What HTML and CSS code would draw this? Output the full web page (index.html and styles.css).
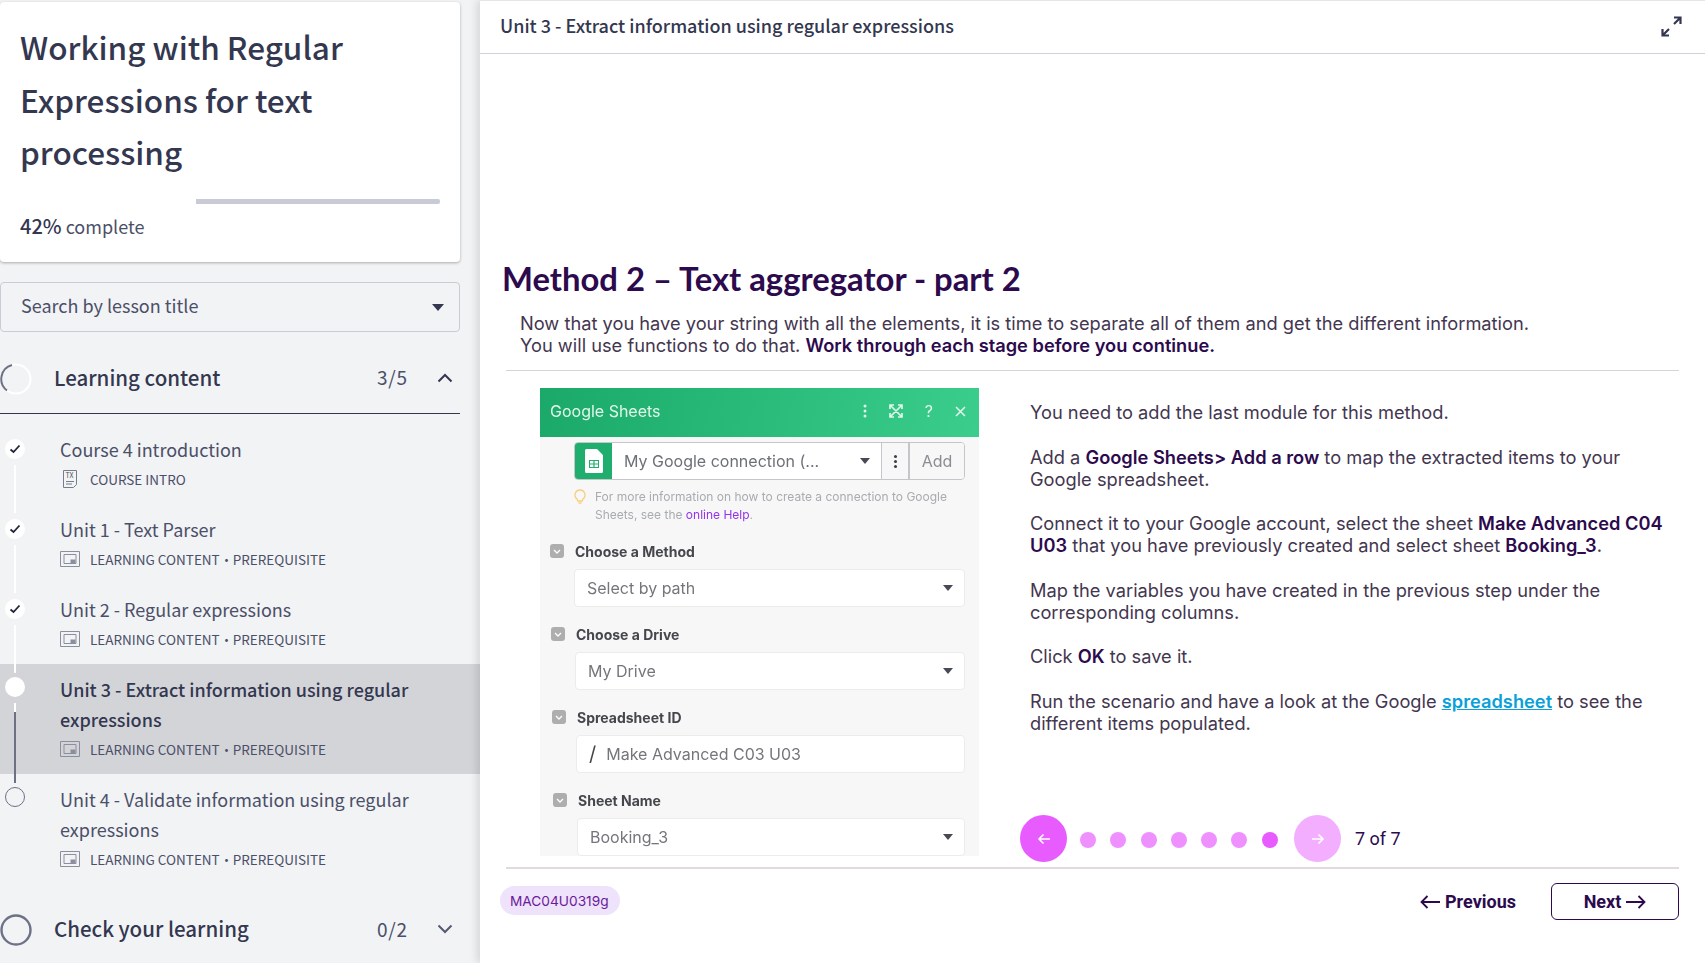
FILE: index.html
```html
<!DOCTYPE html>
<html lang="en">
<head>
  <meta charset="UTF-8">
  <meta name="viewport" content="width=device-width, initial-scale=1.0">
  <title>Working with Regular Expressions for text processing</title>
  <link rel="stylesheet" href="styles.css">
</head>
<body>
  <aside class="sidebar">
    <div class="course-card">
      <h1>Working with Regular Expressions for text processing</h1>
      <div class="progress"><div class="progress-done"></div><div class="progress-left"></div></div>
      <p class="progress-text"><strong>42%</strong> complete</p>
    </div>

    <div class="search">
      <span>Search by lesson title</span>
      <span class="caret"></span>
    </div>

    <div class="section section-open">
      <svg class="ring" width="32" height="32" viewBox="0 0 32 32">
        <circle cx="16" cy="16" r="14.5" fill="#f2f3f5" stroke="#fff" stroke-width="2"/>
        <path d="M12 2 A14.5 14.5 0 0 0 7 27.5" fill="none" stroke="#6e7186" stroke-width="2"/>
      </svg>
      <span class="section-name">Learning content</span>
      <span class="section-count">3/5</span>
      <svg class="chevron" width="16" height="10" viewBox="0 0 16 10"><path d="M1.5 8.5 8 2l6.5 6.5" fill="none" stroke="#333750" stroke-width="2"/></svg>
    </div>

    <ul class="lessons">
      <li class="lesson">
        <div class="marker">
          <span class="dot"><svg width="12" height="10" viewBox="0 0 12 10"><path d="M1.5 5.5 4.5 8l6-6.5" fill="none" stroke="#22253a" stroke-width="1.8"/></svg></span>
          <span class="line"></span>
        </div>
        <div class="lesson-body">
          <div class="lesson-title">Course 4 introduction</div>
          <div class="lesson-meta">
            <svg class="meta-icon" width="20" height="18" viewBox="0 0 20 18"><path d="M3.5.5h13v14l-3 3h-10z" fill="none" stroke="#777b8e"/><path d="M6 11.5h8M6 14h6" stroke="#777b8e"/><text x="5.5" y="8" font-size="7" fill="#555">Tx</text></svg>
            <span>Course intro</span>
          </div>
        </div>
      </li>
      <li class="lesson">
        <div class="marker">
          <span class="dot"><svg width="12" height="10" viewBox="0 0 12 10"><path d="M1.5 5.5 4.5 8l6-6.5" fill="none" stroke="#22253a" stroke-width="1.8"/></svg></span>
          <span class="line"></span>
        </div>
        <div class="lesson-body">
          <div class="lesson-title">Unit 1 - Text Parser</div>
          <div class="lesson-meta">
            <svg class="meta-icon" width="20" height="16" viewBox="0 0 20 16"><path d="M.5.5h19v15H.5z" fill="none" stroke="#8b8e9f"/><path d="M4 3.5h12v9H4z" fill="none" stroke="#8b8e9f"/><path d="M10.5 8.5h5v4h-5z" fill="#8b8e9f"/></svg>
            <span>Learning content</span><span class="sep">·</span><span>Prerequisite</span>
          </div>
        </div>
      </li>
      <li class="lesson">
        <div class="marker">
          <span class="dot"><svg width="12" height="10" viewBox="0 0 12 10"><path d="M1.5 5.5 4.5 8l6-6.5" fill="none" stroke="#22253a" stroke-width="1.8"/></svg></span>
          <span class="line"></span>
        </div>
        <div class="lesson-body">
          <div class="lesson-title">Unit 2 - Regular expressions</div>
          <div class="lesson-meta">
            <svg class="meta-icon" width="20" height="16" viewBox="0 0 20 16"><path d="M.5.5h19v15H.5z" fill="none" stroke="#8b8e9f"/><path d="M4 3.5h12v9H4z" fill="none" stroke="#8b8e9f"/><path d="M10.5 8.5h5v4h-5z" fill="#8b8e9f"/></svg>
            <span>Learning content</span><span class="sep">·</span><span>Prerequisite</span>
          </div>
        </div>
      </li>
      <li class="lesson lesson-current">
        <div class="marker">
          <span class="dot"></span>
          <span class="line line-current"></span>
        </div>
        <div class="lesson-body">
          <div class="lesson-title">Unit 3 - Extract information using regular expressions</div>
          <div class="lesson-meta">
            <svg class="meta-icon" width="20" height="16" viewBox="0 0 20 16"><path d="M.5.5h19v15H.5z" fill="none" stroke="#8b8e9f"/><path d="M4 3.5h12v9H4z" fill="none" stroke="#8b8e9f"/><path d="M10.5 8.5h5v4h-5z" fill="#8b8e9f"/></svg>
            <span>Learning content</span><span class="sep">·</span><span>Prerequisite</span>
          </div>
        </div>
      </li>
      <li class="lesson lesson-next">
        <div class="marker">
          <span class="dot dot-empty"></span>
        </div>
        <div class="lesson-body">
          <div class="lesson-title">Unit 4 - Validate information using regular expressions</div>
          <div class="lesson-meta">
            <svg class="meta-icon" width="20" height="16" viewBox="0 0 20 16"><path d="M.5.5h19v15H.5z" fill="none" stroke="#8b8e9f"/><path d="M4 3.5h12v9H4z" fill="none" stroke="#8b8e9f"/><path d="M10.5 8.5h5v4h-5z" fill="#8b8e9f"/></svg>
            <span>Learning content</span><span class="sep">·</span><span>Prerequisite</span>
          </div>
        </div>
      </li>
    </ul>

    <div class="section section-closed">
      <svg class="ring" width="32" height="32" viewBox="0 0 32 32">
        <circle cx="16" cy="16" r="14.5" fill="none" stroke="#6e7186" stroke-width="2.4"/>
      </svg>
      <span class="section-name">Check your learning</span>
      <span class="section-count">0/2</span>
      <svg class="chevron" width="16" height="10" viewBox="0 0 16 10"><path d="M1.5 1.5 8 8l6.5-6.5" fill="none" stroke="#555972" stroke-width="2"/></svg>
    </div>
  </aside>

  <main class="main">
    <header class="topbar">
      <span>Unit 3 - Extract information using regular expressions</span>
      <svg width="21" height="21" viewBox="0 0 21 21"><path d="M13 1.500h6.500V8M19 2l-6 6M8 19.500H1.500V13M2 19l6-6" fill="none" stroke="#333750" stroke-width="2.200"/></svg>
    </header>

    <section class="slide">
      <h2>Method 2 – Text aggregator - part 2</h2>
      <p class="intro">Now that you have your string with all the elements, it is time to separate all of them and get the different information.<br>You will use functions to do that. <b>Work through each stage before you continue.</b></p>

      <div class="slide-row">
        <div class="panel">
          <div class="panel-head">
            <span>Google Sheets</span>
            <div class="panel-tools">
              <svg width="4" height="14" viewBox="0 0 4 14"><circle cx="2" cy="2" r="1.500" fill="#dff5ea"/><circle cx="2" cy="7" r="1.500" fill="#dff5ea"/><circle cx="2" cy="12" r="1.500" fill="#dff5ea"/></svg>
              <svg width="14" height="14" viewBox="0 0 14 14"><path d="M1 5V1h4M9 1h4v4M13 9v4H9M5 13H1V9M1.500 1.500l11 11M12.500 1.500l-11 11" fill="none" stroke="#dff5ea" stroke-width="1.700"/></svg>
              <span class="tool-q">?</span>
              <svg width="11" height="11" viewBox="0 0 11 11"><path d="M1 1l9 9M10 1l-9 9" stroke="#dff5ea" stroke-width="1.600"/></svg>
            </div>
          </div>

          <div class="panel-body">
            <div class="connection">
              <span class="conn-logo">
                <svg width="18" height="24" viewBox="0 0 18 24"><path d="M0 1.500A1.500 1.500 0 0 1 1.500 0H12l6 6v16.500a1.500 1.500 0 0 1-1.500 1.500h-15A1.500 1.500 0 0 1 0 22.500z" fill="#fff"/><path d="M4 11h10v8H4z" fill="#1fae6e"/><path d="M5 12h3.400v2.500H5zM9.600 12H13v2.500H9.600zM5 15.600h3.400V18H5zM9.600 15.600H13V18H9.600z" fill="#fff"/></svg>
              </span>
              <span class="conn-name">My Google connection (...<i class="tri"></i></span>
              <span class="conn-more"><i></i><i></i><i></i></span>
              <span class="conn-add">Add</span>
            </div>

            <div class="hint">
              <svg width="12" height="15" viewBox="0 0 12 15"><path d="M6 1a5 5 0 0 0-3 9l.8 2h4.400l.8-2a5 5 0 0 0-3-9zM4.500 14h3" fill="none" stroke="#f7cf7b" stroke-width="1.300"/></svg>
              <p>For more information on how to create a connection to Google Sheets, see the <a>online Help</a>.</p>
            </div>

            <div class="field">
              <div class="field-label"><span class="check"><svg width="8" height="5" viewBox="0 0 8 5"><path d="M1 1l3 3 3-3" fill="none" stroke="#fff" stroke-width="1.300"/></svg></span>Choose a Method</div>
              <div class="input">Select by path<i class="tri"></i></div>
            </div>
            <div class="field field-b">
              <div class="field-label"><span class="check"><svg width="8" height="5" viewBox="0 0 8 5"><path d="M1 1l3 3 3-3" fill="none" stroke="#fff" stroke-width="1.300"/></svg></span>Choose a Drive</div>
              <div class="input">My Drive<i class="tri"></i></div>
            </div>
            <div class="field field-c">
              <div class="field-label"><span class="check"><svg width="8" height="5" viewBox="0 0 8 5"><path d="M1 1l3 3 3-3" fill="none" stroke="#fff" stroke-width="1.300"/></svg></span>Spreadsheet ID</div>
              <div class="input"><span class="slash">/</span>Make Advanced C03 U03</div>
            </div>
            <div class="field field-d">
              <div class="field-label"><span class="check"><svg width="8" height="5" viewBox="0 0 8 5"><path d="M1 1l3 3 3-3" fill="none" stroke="#fff" stroke-width="1.300"/></svg></span>Sheet Name</div>
              <div class="input">Booking_3<i class="tri"></i></div>
            </div>
          </div>
        </div>

        <div class="slide-text">
          <div class="copy">
            <p>You need to add the last module for this method.</p>
            <p>Add a <b>Google Sheets&gt; Add a row</b> to map the extracted items to your Google spreadsheet.</p>
            <p>Connect it to your Google account, select the sheet <b>Make Advanced C04 U03</b> that you have previously created and select sheet <b>Booking_3</b>.</p>
            <p>Map the variables you have created in the previous step under the corresponding columns.</p>
            <p>Click <b>OK</b> to save it.</p>
            <p>Run the scenario and have a look at the Google <a>spreadsheet</a> to see the different items populated.</p>
          </div>
          <div class="pager">
            <span class="pager-btn">
              <svg width="14" height="12" viewBox="0 0 14 12"><path d="M13 6H2M6.500 1.500 2 6l4.500 4.500" fill="none" stroke="#fff" stroke-width="1.600"/></svg>
            </span>
            <span class="pager-dots"><i></i><i></i><i></i><i></i><i></i><i></i><i class="on"></i></span>
            <span class="pager-btn pager-off">
              <svg width="14" height="12" viewBox="0 0 14 12"><path d="M1 6h11M7.500 1.500 12 6l-4.500 4.500" fill="none" stroke="#fff" stroke-width="1.600"/></svg>
            </span>
            <span class="pager-count">7 of 7</span>
          </div>
        </div>
      </div>
    </section>

    <footer class="foot">
      <span class="pill">MAC04U0319g</span>
      <div class="foot-nav">
        <a class="nav-prev">
          <svg width="20" height="14" viewBox="0 0 20 14"><path d="M20 7H2M7.500 1 1.500 7l6 6" fill="none" stroke="#2c0a4d" stroke-width="1.800"/></svg>
          Previous
        </a>
        <a class="nav-next">
          Next
          <svg width="20" height="14" viewBox="0 0 20 14"><path d="M0 7h18M12.500 1l6 6-6 6" fill="none" stroke="#2c0a4d" stroke-width="1.800"/></svg>
        </a>
      </div>
    </footer>
  </main>
</body>
</html>
```

FILE: styles.css
```css
:root {
  --side-bg: #f2f3f5;
  --slate: #333750;
  --slate-soft: #4b4f68;
  --plum: #2c0a4d;
  --copy: #43364f;
  --pink: #e85bff;
  --sans: "Noto Sans CJK SC", "Noto Sans", sans-serif;
}

* {
  margin: 0;
  padding: 0;
  box-sizing: border-box;
}

html, body {
  height: 100%;
}

body {
  display: flex;
  height: 963px;
  overflow: hidden;
  background: #fff;
  font-family: var(--sans);
  color: var(--slate);
}

/* Sidebar */
.sidebar {
  width: 480px;
  flex-shrink: 0;
  padding-top: 2px;
  background: var(--side-bg);
  overflow: hidden;
}

.course-card {
  width: 460px;
  height: 260px;
  padding: 18px 20px 0;
  background: #fff;
  border-radius: 4px;
  box-shadow: 0 1px 3px rgba(0, 0, 0, 0.3);
}

.course-card h1 {
  font-size: 31.5px;
  line-height: 52.5px;
  font-weight: 500;
  width: 380px;
}

.progress {
  display: flex;
  height: 5px;
  margin-top: 21px;
  width: 420px;
}

.progress-done {
  width: 42%;
}

.progress-left {
  flex: 1;
  background: #c8cad6;
  border-radius: 0 2px 2px 0;
}

.progress-text {
  margin-top: 10px;
  font-size: 18px;
  line-height: 24px;
  color: var(--slate-soft);
}

.progress-text strong {
  font-size: 20px;
  font-weight: 500;
  color: var(--slate);
}

.search {
  display: flex;
  align-items: center;
  justify-content: space-between;
  width: 460px;
  height: 50px;
  margin-top: 20px;
  padding: 0 15px 0 20px;
  border: 1px solid #c9ccd5;
  border-radius: 4px;
  font-size: 18px;
  color: var(--slate-soft);
}

.search span:first-child {
  padding-bottom: 4px;
}

.caret {
  width: 0;
  height: 0;
  border-left: 6px solid transparent;
  border-right: 6px solid transparent;
  border-top: 7px solid var(--slate);
}

.section {
  display: flex;
  align-items: center;
  width: 460px;
  height: 70px;
}

.section-open {
  margin-top: 12px;
  border-bottom: 1px solid var(--slate);
}

.section-closed {
  margin-top: 11px;
}

.ring {
  flex-shrink: 0;
  margin-right: 22px;
}

.section-name {
  flex: 1;
  padding-bottom: 4px;
  font-size: 20.500px;
  font-weight: 500;
}

.section-count {
  width: 60px;
  padding-bottom: 4px;
  font-size: 19px;
  letter-spacing: 0.8px;
  color: var(--slate-soft);
}

.chevron {
  margin-right: 7px;
  margin-bottom: 2px;
}

.lessons {
  list-style: none;
  margin-top: 10px;
}

.lesson {
  display: flex;
  height: 80px;
}

.lesson-current,
.lesson-next {
  height: 110px;
}

.lesson-current {
  background: #d3d4d8;
}

.marker {
  display: flex;
  flex-direction: column;
  align-items: center;
  width: 30px;
  padding-top: 15px;
  margin-right: 30px;
}

.lesson-current .marker,
.lesson-next .marker {
  padding-top: 13px;
}

.dot {
  display: flex;
  align-items: center;
  justify-content: center;
  width: 20px;
  height: 20px;
  flex-shrink: 0;
  border-radius: 50%;
  background: #fff;
}

.dot-empty {
  background: none;
  border: 1px solid #6e7186;
}

.line {
  position: relative;
  flex: 1;
  width: 2px;
  margin: 6px 0 -9px;
  background: #fff;
}

.line-current {
  background: linear-gradient(#fff 0 9px, #6e7186 9px);
}

.lesson-body {
  padding-top: 10px;
}

.lesson-title {
  font-size: 18px;
  line-height: 30px;
  color: var(--slate-soft);
  width: 370px;
}

.lesson-current .lesson-title {
  font-weight: 500;
  color: var(--slate);
}

.lesson-meta {
  display: flex;
  align-items: center;
  gap: 10px;
  height: 30px;
  font-size: 13.500px;
  color: var(--slate-soft);
  text-transform: uppercase;
}

.sep {
  width: 13px;
  margin: 0 -10px;
  text-align: center;
}

/* Main */
.main {
  position: relative;
  flex: 1;
  display: flex;
  flex-direction: column;
  box-shadow: -3px 0 8px rgba(0, 0, 0, 0.12);
  background: #fff;
}

.topbar {
  display: flex;
  align-items: center;
  justify-content: space-between;
  height: 54px;
  padding: 0 23px 0 20px;
  border-top: 1px solid #e5e5e8;
  border-bottom: 1px solid #cfd0da;
  font-size: 18px;
  font-weight: 500;
}

.topbar span {
  padding-bottom: 4px;
}

.topbar svg {
  margin-bottom: 2px;
}

.slide {
  flex: 1;
  padding: 205px 26px 0;
}

.slide h2 {
  margin-left: -4px;
  font-family: Lato, sans-serif;
  font-size: 32.800px;
  line-height: 40px;
  font-weight: 700;
  color: var(--plum);
}

.intro {
  margin-top: 13px;
  padding-left: 14px;
  font-family: Inter, sans-serif;
  font-size: 18.250px;
  line-height: 22px;
  color: var(--copy);
}

.intro b {
  font-weight: 600;
  color: var(--plum);
}

.slide-row {
  display: flex;
  height: 499px;
  margin-top: 14px;
  padding-top: 17px;
  border-top: 1px solid #d6d4d6;
  border-bottom: 2px solid #e0dcdc;
}

/* Screenshot panel */
.panel {
  width: 439px;
  height: 468px;
  margin-left: 34px;
  background: #f7f7f7;
  overflow: hidden;
  font-family: Inter, sans-serif;
  filter: blur(0.35px);
}

.panel-head {
  display: flex;
  align-items: center;
  justify-content: space-between;
  height: 49px;
  padding: 0 13px 3px 10px;
  background: linear-gradient(100deg, #1aa968, #3acd8b);
  font-size: 16px;
  color: #e3f6ec;
}

.panel-tools {
  display: flex;
  align-items: center;
  gap: 22px;
}

.tool-q {
  font-size: 16px;
}

.panel-body {
  padding: 5px 14px 0 34px;
}

.connection {
  display: flex;
  height: 38px;
  border: 1px solid #c4c6ca;
  border-radius: 4px;
  overflow: hidden;
  background: #fff;
  font-size: 16px;
  color: #6e7078;
}

.conn-logo {
  display: flex;
  align-items: center;
  justify-content: center;
  width: 37px;
  background: #1fae6e;
}

.conn-name {
  flex: 1;
  display: flex;
  align-items: center;
  padding-left: 12px;
  position: relative;
}

.conn-more {
  display: flex;
  flex-direction: column;
  align-items: center;
  justify-content: center;
  gap: 2px;
  width: 29px;
  border-left: 1px solid #c4c6ca;
  border-right: 2px solid #c4c6ca;
  background: #f7f7f7;
}

.conn-more i {
  width: 3px;
  height: 3px;
  border-radius: 50%;
  background: #3d3f47;
}

.conn-add {
  display: flex;
  align-items: center;
  justify-content: center;
  width: 54px;
  background: #f7f7f7;
  color: #8b8d93;
}

.tri {
  width: 0;
  height: 0;
  border-left: 5px solid transparent;
  border-right: 5px solid transparent;
  border-top: 6px solid #474a55;
  margin-left: auto;
  margin-right: 11px;
}

.hint {
  display: flex;
  gap: 9px;
  margin-top: 8px;
  margin-bottom: 15px;
}

.hint svg {
  flex-shrink: 0;
  margin-top: 1px;
}

.hint p {
  font-size: 12px;
  line-height: 18px;
  color: #a9abb0;
}

.hint a {
  color: #9333ea;
}

.field {
  display: flex;
  flex-direction: column;
  margin-bottom: 15px;
}

.field-b { padding-left: 1px; }
.field-c { padding-left: 2px; }
.field-d { padding-left: 3px; }

.field-label {
  display: flex;
  align-items: center;
  gap: 11px;
  height: 24px;
  margin: 0 0 6px -24px;
  font-size: 14px;
  font-weight: 700;
  color: #45474d;
}

.check {
  display: flex;
  align-items: center;
  justify-content: center;
  width: 14px;
  height: 14px;
  border-radius: 3px;
  background: #aeaeae;
}

.input {
  display: flex;
  align-items: center;
  height: 38px;
  padding-left: 12px;
  background: #fff;
  border: 1px solid #ececec;
  border-radius: 4px;
  font-size: 16px;
  color: #74767c;
}

.slash {
  margin-right: 10px;
  font-size: 20px;
  color: #45474d;
}

/* Slide copy */
.slide-text {
  display: flex;
  flex-direction: column;
  margin-left: 41px;
  flex: 1;
}

.copy {
  padding: 13px 0 0 10px;
  height: 427px;
  font-family: Inter, sans-serif;
  font-size: 18.250px;
  line-height: 22px;
  color: var(--copy);
}

.copy p {
  margin-bottom: 22.500px;
}

.copy b {
  font-weight: 600;
  color: var(--plum);
}

.copy a {
  font-weight: 600;
  color: #0aa0d8;
  text-decoration: underline;
}

.pager {
  display: flex;
  align-items: center;
  height: 47px;
  font-family: Roboto, sans-serif;
}

.pager-btn {
  display: flex;
  align-items: center;
  justify-content: center;
  width: 47px;
  height: 47px;
  border-radius: 50%;
  background: var(--pink);
}

.pager-off {
  background: #f3aeff;
}

.pager-dots {
  display: flex;
  gap: 14.300px;
  margin: 3px 0 0 13px;
  width: 214px;
}

.pager-dots i {
  width: 16px;
  height: 16px;
  border-radius: 50%;
  background: #ef90ff;
}

.pager-dots i.on {
  background: var(--pink);
}

.pager-count {
  margin-left: 14px;
  font-size: 18px;
  color: var(--plum);
}

/* Footer */
.foot {
  display: flex;
  align-items: flex-start;
  justify-content: space-between;
  height: 94px;
  padding: 14px 26px 0 20px;
}

.pill {
  display: flex;
  align-items: center;
  height: 29px;
  margin-top: 3px;
  padding: 0 11px 0 10px;
  border-radius: 15px;
  background: #efe2fb;
  font-family: Inter, sans-serif;
  font-size: 13.700px;
  color: #6a1b9a;
}

.foot-nav {
  display: flex;
  align-items: center;
  gap: 35px;
  font-family: Roboto, sans-serif;
  font-size: 18px;
  font-weight: 700;
  color: var(--plum);
}

.nav-prev,
.nav-next {
  display: flex;
  align-items: center;
  gap: 5px;
}

.nav-next {
  justify-content: center;
  width: 128px;
  height: 37px;
  border: 1.500px solid var(--plum);
  border-radius: 6px;
}
```
